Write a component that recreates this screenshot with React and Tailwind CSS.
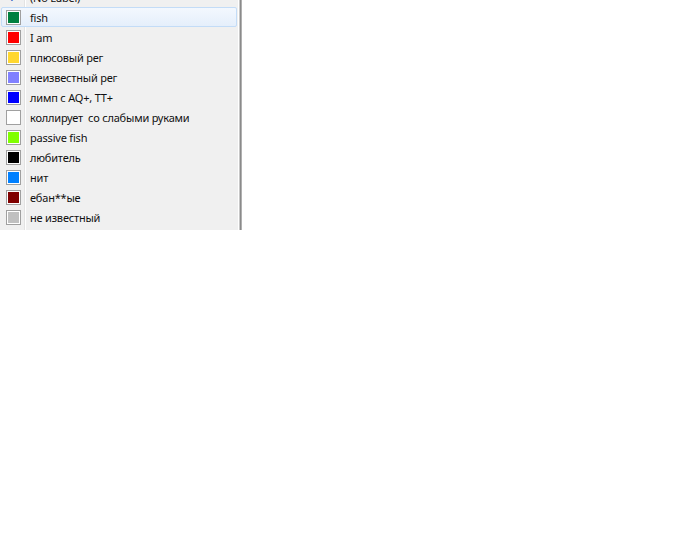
import React from "react";

const rows = [
  { label: "(No Label)", color: null },
  { label: "fish", color: "#008040", selected: true },
  { label: "I am", color: "#ff0000" },
  { label: "плюсовый рег", color: "#ffd730" },
  { label: "неизвестный рег", color: "#8080ff" },
  { label: "лимп с AQ+, TT+", color: "#0000ff" },
  { label: "коллирует  со слабыми руками", color: "#ffffff" },
  { label: "passive fish", color: "#80ff00" },
  { label: "любитель", color: "#000000" },
  { label: "нит", color: "#0080ff" },
  { label: "ебан**ые", color: "#800000" },
  { label: "не известный", color: "#c0c0c0" },
];

export default function App() {
  return (
    <div className="w-[700px] h-[560px] bg-white overflow-hidden">
      <div className="flex w-[242px] h-[230px] bg-[#f0f0f0] overflow-hidden">
        <div className="relative flex-1 overflow-hidden">
          <div className="absolute left-[24px] top-0 bottom-0 w-px bg-[#e3e3e3]" />
          <div className="absolute left-[25px] top-0 bottom-0 w-px bg-white" />
          <div className="flex flex-col mt-[-13px]">
            {rows.map((r, i) => (
              <div
                key={i}
                className={
                  r.selected
                    ? "relative flex items-center h-[20px] ml-px mr-[1px] rounded-[2px] border border-[#c3dcf7] bg-gradient-to-b from-[#f3f8fe] to-[#e5effb]"
                    : "relative flex items-center h-[20px] ml-px mr-[1px] border border-transparent"
                }
              >
                <div className="w-[23px] flex justify-center items-center shrink-0">
                  {r.color ? (
                    <div className="w-[15px] h-[15px] border border-[#a0a0a0] p-px bg-white">
                      <div className="w-full h-full" style={{ background: r.color }} />
                    </div>
                  ) : (
                    <span className="text-[#3060c0] text-[11px] leading-none">✓</span>
                  )}
                </div>
                <span
                  className="ml-[5px] text-[11px] tracking-[-0.2px] text-[#111] whitespace-pre leading-none"
                  style={{ fontFamily: '"Noto Sans", "DejaVu Sans", sans-serif' }}
                >
                  {r.label}
                </span>
              </div>
            ))}
          </div>
        </div>
        <div className="w-px bg-white" />
        <div className="w-px bg-[#c8c8c8]" />
        <div className="w-px bg-[#8a8a8a]" />
        <div className="w-px bg-[#b0b0b0]" />
      </div>
    </div>
  );
}
